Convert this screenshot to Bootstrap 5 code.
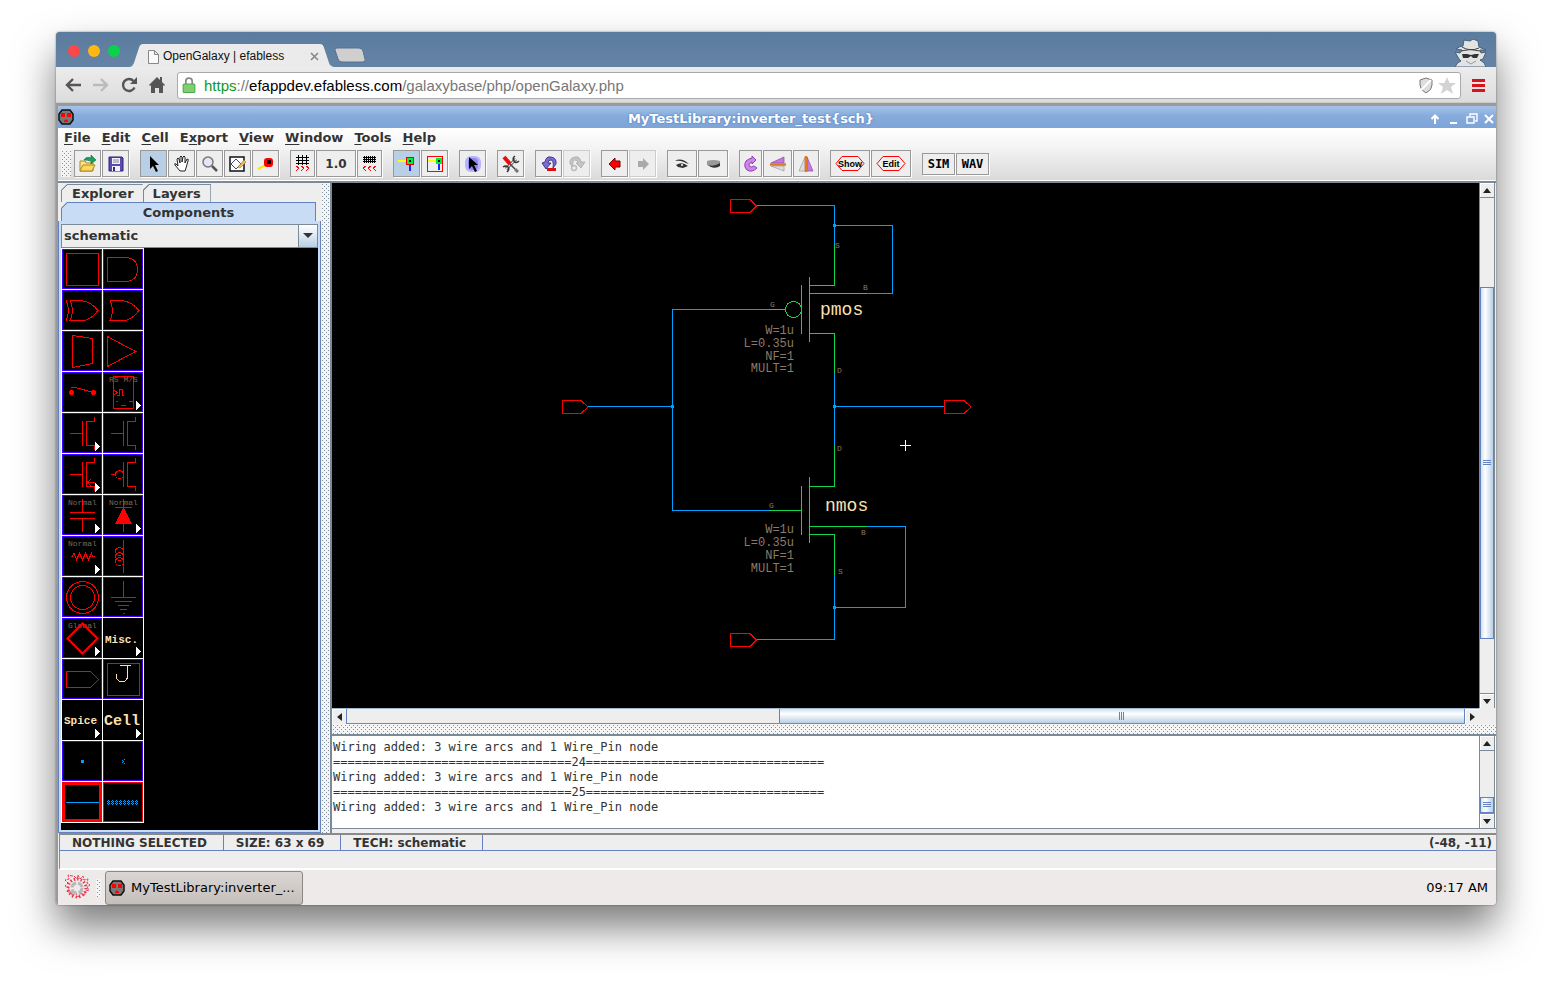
<!DOCTYPE html>
<html lang="en">
<head>
<meta charset="utf-8">
<meta name="viewport" content="width=device-width, initial-scale=1">
<title>OpenGalaxy | efabless</title>
<link href="https://cdn.jsdelivr.net/npm/bootstrap@5.3.0/dist/css/bootstrap.min.css" rel="stylesheet">
<style>
  :root { --steel: #7a8a99; --face: #eeeeee; --blue: #6382bf; --pick: #b8cfe5; }
  body { background: #fff; padding: 32px 56px 80px; font-family: "DejaVu Sans", sans-serif; color: #333; font-size: 12px; line-height: 16px; }
  button { padding: 0; border: 0; background: none; color: inherit; font: inherit; }
  svg { display: block; flex: none; }
  .browser { min-height: calc(100vh - 112px); border-radius: 4px; overflow: hidden; background: #9a9a9a; }
  .browser-shadow { border-radius: 4px; box-shadow: 0 22px 40px rgba(0,0,0,.52), 0 0 2px rgba(0,0,0,.5); }

  /* browser frame */
  .tabstrip { height: 35px; background: linear-gradient(#5b7c9f, #6583a5); padding-left: 12px; }
  .light { width: 12px; height: 12px; border-radius: 50%; margin-bottom: 10px; }
  .tab-item { width: 204px; height: 23px; margin-left: 10px; color: #111; font: 12px/25px "Liberation Sans", sans-serif; }
  .tab-item > svg.tab-shape { position: absolute; inset: 0; width: 100%; height: 100%; }
  .tab-item > .tab-text { position: relative; padding: 0 15px 0 18px; }
  .addressbar { height: 36px; background: linear-gradient(#ececec, #dcdcdc); padding: 1px 9px 0; border-bottom: 1px solid #ccc; }
  .addressbar .nav-btn { width: 18px; margin-right: 10px; }
  .urlbox { height: 27px; background: #fff; border: 1px solid #aaa; border-radius: 3px; font: 15px/25px "Liberation Sans", sans-serif; color: #777; }

  /* remote desktop window */
  .desk { margin: 3px 0 0 2px; background: var(--face); }
  .titlebar { height: 22px; background: linear-gradient(#a6c3ea, #86abdc 45%, #7ea4d8); color: #fff; font-size: 13px; font-weight: 700; text-shadow: 0 0 2px #3c6cb0; }
  .menubar { height: 19px; background: linear-gradient(#fff, #f4f4f4); font-size: 13px; font-weight: 700; padding-left: 6px; gap: 11px; }
  .menubar a { color: #333; text-decoration: none; line-height: 19px; }
  .menubar u { text-underline-offset: 2px; }
  .toolbar { height: 34px; background: linear-gradient(#f4f4f4, #dadada); gap: 11px; border-bottom: 1px solid #fff; padding-left: 3px; }
  .tool-set { gap: 1px; }
  .grip { background: #f4f4f4 url("data:image/svg+xml,%3Csvg xmlns='http://www.w3.org/2000/svg' width='4' height='4'%3E%3Cpath d='M1 1h1v1H1zM3 3h1v1H3z' fill='%238492a0'/%3E%3C/svg%3E"); }
  .toolbar .grip { width: 10px; height: 27px; margin-right: -8px; }
  .tool { width: 27px; height: 27px; border: 1px solid #999; box-shadow: 1px 1px 0 #fff; background: var(--face); display: flex; align-items: center; justify-content: center; font-weight: 700; }
  .tool.on { background: var(--pick); }
  .tool:disabled { border-color: #ccc; }
  .tool.w-grid { width: 25px; } .tool.w-num { width: 40px; } .tool.w-eye { width: 30px; }
  .tool.w-rot { width: 23px; } .tool.w-flip { width: 29px; } .tool.w-mir { width: 26px; }
  .tool.w-sim { width: 33px; height: 22px; color: #000; font: 700 12px/20px "DejaVu Sans Mono", monospace; }

  .workspace { border-top: 2px solid var(--steel); }
  .sidepanel { width: 263px; padding-top: 1px; font-size: 13px; font-weight: 700; }
  .side-tab { --line: var(--steel); --fill: var(--face); height: 18px; border: 1px solid var(--line); border-bottom: 0; line-height: 17px; padding: 0 9px; clip-path: polygon(6px 0, 100% 0, 100% 100%, 0 100%, 0 6px); background: linear-gradient(135deg, var(--line) 5px, var(--fill) 5px) border-box; }
  .side-tab.first { margin-left: 3px; border-right: 0; padding: 0 9px 0 10px; }
  .side-tab.wide { --line: var(--blue); --fill: #c8ddf5; margin: 0 5px 0 3px; height: 19px; text-align: center; }
  .side-body { background: #c8ddf5; border: 1px solid var(--blue); border-top: 0; padding: 3px 2px 2px; }
  .combo { height: 24px; border: 1px solid var(--steel); position: relative; }
  .combo select { appearance: none; width: 100%; height: 22px; border: 0; background: var(--face); color: #333; font: inherit; padding: 0 2px; border-radius: 0; }
  .combo span { position: absolute; right: 0; top: 0; width: 19px; height: 22px; border-left: 1px solid var(--steel); background: linear-gradient(#fff, var(--pick)); pointer-events: none; }
  .palette { background: #000; }
  .cells { display: grid; grid-template-columns: 40px 40px; grid-auto-rows: 40px; gap: 1px; padding: 1px; background: #fff; width: 83px; }
  .cells button { background: #000; box-shadow: inset 0 0 0 1px #40f; }
  .cells button.bare { box-shadow: none; }
  .cells button.red { box-shadow: inset 0 0 0 1px red; }
  .cells button.picked { box-shadow: inset 0 0 0 3px red; }
  .cells svg { fill: none; stroke: red; stroke-width: 1; shape-rendering: crispEdges; }
  .cells text { stroke: none; fill: #786a5c; font: 8px "Liberation Mono", monospace; }
  .cells text.big { fill: #fde0b0; font-weight: 700; font-size: 11px; }
  .split-v { width: 9px; }
  .split-h { height: 10px; }

  .mainpane { min-width: 0; border-left: 2px solid var(--steel); }
  .drawing { background: #000; min-width: 0; overflow: hidden; }
  .drawing text { font: 12px "Liberation Mono", monospace; fill: #8c7a64; text-anchor: end; }
  .drawing text.pin { font-size: 8px; text-anchor: start; }
  .drawing text.name { font-size: 18px; fill: #fde0b0; text-anchor: start; }
  .bar-v { width: 16px; border-left: 1px solid var(--steel); border-right: 1px solid var(--steel); margin-right: 1px; background: var(--face); }
  .bar-h { height: 16px; border-top: 1px solid #a3b8cc; border-bottom: 1px solid var(--steel); background: var(--face); }
  .sb { width: 14px; height: 15px; display: flex; align-items: center; justify-content: center; background: var(--face); box-shadow: inset 1px 1px 0 #fff; }
  .bar-v .sb:first-child { border-bottom: 1px solid var(--steel); }
  .bar-v .sb:last-child { border-top: 1px solid var(--steel); }
  .thumb-v { border: 1px solid var(--blue); background: linear-gradient(90deg, #cfe1f3, #fff 35%, var(--pick)); display: flex; align-items: center; justify-content: center; }
  .thumb-h { border: 1px solid var(--blue); border-width: 0 1px; background: linear-gradient(#cfe1f3, #fff 35%, var(--pick)); display: flex; align-items: center; justify-content: center; }
  .logpane { height: 95px; border-top: 2px solid var(--steel); border-bottom: 1px solid var(--steel); background: #fff; }
  .logpane textarea { border: 0; padding: 4px 0 0 1px; resize: none; overflow: hidden; background: #fff; color: #333; font: 12px/15px "DejaVu Sans Mono", monospace; outline: 0; }
  .status { height: 18px; margin-left: 1px; border-top: 2px solid #8a8a8a; border-left: 1px solid #8a8a8a; border-bottom: 1px solid var(--blue); font-weight: 700; line-height: 16px; }
  .status > .cell-s { padding: 0 16px 0 12px; border-right: 1px solid var(--blue); }
  .status-rest { height: 19px; margin-left: 1px; border-left: 1px solid #8a8a8a; border-bottom: 2px solid #fff; }
  .taskbar { height: 35px; background: #edeae9; color: #000; font-size: 13px; line-height: 18px; padding: 1px 8px 0 4px; }
  .task { width: 198px; height: 34px; border: 1px solid #8c8782; border-radius: 3px; background: linear-gradient(#dad6d3, #c4bfbb); padding: 0 3px; white-space: nowrap; gap: 6px; }
</style>
</head>
<body>
<div class="browser-shadow">
<div class="browser d-flex flex-column">
  <header class="tabstrip d-flex align-items-end">
    <div class="d-flex gap-2 align-self-end">
      <span class="light" style="background:#fc4848"></span><span class="light" style="background:#fdb813"></span><span class="light" style="background:#0bd24c"></span>
    </div>
    <div class="tab-item position-relative">
      <svg class="tab-shape" viewBox="0 0 206 23" preserveAspectRatio="none"><path d="M0 23Q3 22 4 19L9 4Q10 0 13 0H192Q195 0 196 4L201 19Q202 22 206 23Z" fill="#ebebeb"/></svg>
      <div class="tab-text d-flex align-items-center">
        <svg width="11" height="14" viewBox="0 0 11 14" fill="#fafafa" stroke="#888"><path d="M.5.5h6l4 4v9H.5zM6.500.5v4h4"/></svg>
        <span class="ms-1 flex-grow-1">OpenGalaxy | efabless</span>
        <svg width="9" height="9" stroke="#888" stroke-width="1.6"><path d="M1 1l7 7M8 1l-7 7"/></svg>
      </div>
    </div>
    <svg width="34" height="20" viewBox="0 0 34 20"><path d="M1 3Q0 1 3 1H25Q28 1 29 4L31 12Q32 15 29 15H8Q5 15 4 12Z" fill="#cfcfcf" stroke="#55718f"/></svg>
    <svg class="ms-auto me-2" width="34" height="28" viewBox="0 0 34 28">
      <path d="M1 28Q3 23 7 22L5 20 1 13 6 14 8 11 2 10Q6 7 9 7L10 1 16 2 19 0 24 2 25 8 32 11 26 11 27 14 32 13 29 20 26 21Q31 23 32 28Z" fill="#e3e3e3" stroke="#49607a"/>
      <path d="M8 15h5l4 1 4-1h4l-2 4h-4l-2-2-3 2H9z" fill="#333"/><path d="M8 8q8 5 17 1M7 12q9-3 19 0" fill="none" stroke="#444"/><path d="M12 22l5 3 5-3" fill="none" stroke="#999"/>
    </svg>
  </header>
  <div class="addressbar d-flex align-items-center">
    <button class="nav-btn" aria-label="Back"><svg width="16" height="14" fill="none" stroke="#555" stroke-width="2.4"><path d="M16 7H2M8 1L2 7l6 6"/></svg></button>
    <button class="nav-btn" aria-label="Forward"><svg width="16" height="14" fill="none" stroke="#bbb" stroke-width="2.400"><path d="M0 7h14M8 1l6 6-6 6"/></svg></button>
    <button class="nav-btn" aria-label="Reload"><svg width="16" height="16" fill="none" stroke="#555" stroke-width="2.4"><path d="M13.500 10.500A6 6 0 1 1 12.500 4"/><path d="M16 0v7H9z" fill="#555" stroke="none"/></svg></button>
    <button class="nav-btn" aria-label="Home"><svg width="16" height="16" fill="#555"><path d="M8 0l8 8-1 1-1-1v8H10v-5H6v5H2V8L1 9 0 8zM11 0h2v5l-2-2z"/></svg></button>
    <div class="urlbox d-flex align-items-center flex-grow-1 px-1" >
      <svg class="ms-0" width="14" height="16" viewBox="0 0 12 15"><path d="M3 7V4a3 3 0 0 1 6 0v3" fill="none" stroke="#888" stroke-width="1.600"/><rect x=".5" y="6.500" width="11" height="8" rx="1" fill="#7fcf72" stroke="#4ba848"/></svg>
      <div class="flex-grow-1 ms-2" role="textbox" aria-label="Address"><span style="color:#0a9a1e">https</span>://<span style="color:#000">efappdev.efabless.com</span>/galaxybase/php/openGalaxy.php</div>
      <svg width="16" height="17" viewBox="0 0 16 17"><path d="M8 1l6 2v5q0 5-6 8-6-3-6-8V3z" fill="#ddd" stroke="#777"/><path d="M13 3L3 13" stroke="#fff" stroke-width="2"/></svg>
      <svg class="ms-1" width="18" height="17" viewBox="0 0 18 17"><path d="M9 0l2.500 6H18l-5 4 2 7-6-4-6 4 2-7-5-4h6.500z" fill="#d3d3d3"/></svg>
    </div>
    <button class="ms-2" aria-label="Menu"><svg width="18" height="13" fill="#d7141e"><path d="M3 0h13v3H3zM3 5h13v3H3zM3 10h13v3H3z"/></svg></button>
  </div>

  <main class="desk flex-grow-1 d-flex flex-column">
    <div class="titlebar d-flex align-items-center">
      <svg width="16" height="16" viewBox="0 0 16 16"><path d="M4 1h8l3 4v6l-3 4H4l-3-4V5z" fill="#777" stroke="#111" stroke-width="1.500"/><path d="M3 4h4v4H3zM9 4h4v4H9zM6 12l2-2 2 2v1H6z" fill="red"/></svg>
      <div class="flex-grow-1 text-center pt-1">MyTestLibrary:inverter_test{sch}</div>
      <svg class="mt-1" width="68" height="14" viewBox="0 0 68 14" fill="none" stroke="#fff" stroke-width="2"><path d="M7 12V5M3.500 7L7 3.500 10.500 7M22 11h7"/><path d="M39 5h7v6h-7zM42 4V2h7v7h-2" stroke-width="1.400"/><path d="M57 3l8 8M65 3l-8 8"/></svg>
    </div>
    <nav class="menubar d-flex" aria-label="Application menu">
      <a href="#"><u>F</u>ile</a><a href="#"><u>E</u>dit</a><a href="#"><u>C</u>ell</a><a href="#">E<u>x</u>port</a><a href="#"><u>V</u>iew</a><a href="#"><u>W</u>indow</a><a href="#"><u>T</u>ools</a><a href="#"><u>H</u>elp</a>
    </nav>
    <div class="toolbar d-flex align-items-center">
      <div class="grip"></div>
      <div class="tool-set d-flex">
        <button class="tool" aria-label="Open"><svg width="18" height="18" viewBox="0 0 18 18"><path d="M1 16V6h5l1 2h7v8z" fill="#fce588" stroke="#a8891f"/><path d="M1 16l3-6h12l-3 6z" fill="#ffd75e" stroke="#a8891f"/><path d="M5 5q2-4 7-2V0l5 5-5 4V6q-4-1-7-1z" fill="#1ea05a" stroke="#0b6b3a" stroke-width=".6"/></svg></button>
        <button class="tool" aria-label="Save"><svg width="16" height="16" viewBox="0 0 16 16"><path d="M1 1h13l1 1v13H1z" fill="#5b4bb0" stroke="#2d2377"/><path d="M4 2h8v6H4zM4 10h8v5H4z" fill="#f2f0fb"/><path d="M5 4h6M5 6h6" stroke="#888"/><path d="M5 11h2v4H5z" fill="#332a80"/></svg></button>
      </div>
      <div class="tool-set d-flex">
        <button class="tool on" aria-label="Select"><svg width="12" height="18" viewBox="0 0 12 18"><path d="M2 1v13l3-3 3 6 2-1-3-6h4z"/></svg></button>
        <button class="tool" aria-label="Pan"><svg width="18" height="18" viewBox="0 0 18 18" fill="#fff" stroke="#222"><path d="M7 16l-5-6q-1-2 1-1l2 2-1-7q1-2 2 0l1 4V2q1-2 2 0v5l1-5q1-2 2 0v6l2-4q2 0 1 2l-2 7-1 3z"/></svg></button>
        <button class="tool" aria-label="Zoom"><svg width="18" height="18" viewBox="0 0 18 18"><circle cx="7" cy="7" r="5" fill="#e2e6f6" stroke="#777" stroke-width="1.500"/><path d="M11 11l5 5" stroke="#555" stroke-width="2.500"/></svg></button>
        <button class="tool" aria-label="Outline"><svg width="19" height="18" viewBox="0 0 19 18"><path d="M2 2h14v14H2z" fill="#fff" stroke="#111" stroke-width="1.500"/><path d="M3 9l5-5 5 5-5 5z" fill="none" stroke="#448"/><path d="M10 12l6-7 2 2-6 6z" fill="#edbc5c" stroke="#a8702a" stroke-width=".6"/></svg></button>
        <button class="tool" aria-label="Measure"><svg width="19" height="18" viewBox="0 0 19 18"><path d="M2 14l4-2 5-3" stroke="#f3ea00" stroke-width="2" fill="none"/><rect x="8" y="3" width="9" height="9" rx="3" fill="red"/><rect x="11" y="5" width="4" height="4" fill="#200"/></svg></button>
      </div>
      <div class="tool-set d-flex">
        <button class="tool w-grid" aria-label="Coarser grid"><svg width="15" height="17" viewBox="0 0 15 17" fill="none" stroke="#000" shape-rendering="crispEdges"><path d="M1 2.500h13M1 5.500h13M1 8.500h13M3.500 0v10M7.500 0v10M11.500 0v10"/><path d="M1 11l3 2-3 3M6 11l3 2-3 3M11 11l3 2-3 3" stroke="red"/></svg></button>
        <button class="tool w-num">1.0</button>
        <button class="tool w-grid" aria-label="Finer grid"><svg width="15" height="17" viewBox="0 0 15 17" fill="none" stroke="#000" shape-rendering="crispEdges"><path d="M1 2.500h13M1 4.500h13M1 6.500h13M2.500 1v7M4.500 1v7M6.500 1v7M8.500 1v7M10.500 1v7M12.500 1v7"/><path d="M4 11l-3 2 3 3M9 11l-3 2 3 3M14 11l-3 2 3 3" stroke="red"/></svg></button>
      </div>
      <div class="tool-set d-flex">
        <button class="tool on" aria-label="Select objects"><svg width="19" height="18" viewBox="0 0 19 18" shape-rendering="crispEdges"><path d="M1 6h9" stroke="#ff0" stroke-width="2"/><path d="M13 10v6" stroke="#22f" stroke-width="2"/><path d="M9.500 2.500h7v7h-7z" fill="#0e3" stroke="#e00"/><path d="M12 5h2v2h-2z"/></svg></button>
        <button class="tool" aria-label="Select area"><svg width="18" height="18" viewBox="0 0 18 18" shape-rendering="crispEdges"><path d="M1.500 1.500h15v15h-15z" fill="none" stroke="red"/><path d="M2 6h8" stroke="#ff0" stroke-width="2"/><path d="M13 9v6" stroke="#22f" stroke-width="2"/><path d="M10 3h6v6h-6z" fill="#0e3"/><path d="M12 5h2v2h-2z"/></svg></button>
      </div>
      <div class="tool-set d-flex"><button class="tool" aria-label="Special select"><svg width="18" height="18" viewBox="0 0 18 18"><rect x="1" y="1" width="16" height="16" rx="6" fill="#b9b3ff"/><rect x="4" y="3" width="10" height="12" rx="4" fill="#8f85f2"/><path d="M5 2v12l3-3 3 6 2-1-3-6h4z"/></svg></button></div>
      <div class="tool-set d-flex"><button class="tool" aria-label="Preferences"><svg width="18" height="18" viewBox="0 0 18 18"><path d="M4 14L14 4" stroke="#333" stroke-width="3"/><path d="M3 15L15 3" stroke="#eee" stroke-width="1.500"/><path d="M13 1q-3 2-1 5t5 0M1 12q3-2 5 0t-1 5" fill="none" stroke="#333" stroke-width="1.500"/><path d="M2 2l6 7" stroke="#d11" stroke-width="4"/><path d="M8 9l5 5" stroke="#444" stroke-width="1.500"/><path d="M13 14l3 3" stroke="#777" stroke-width="3"/></svg></button></div>
      <div class="tool-set d-flex">
        <button class="tool" aria-label="Undo"><svg width="18" height="18" viewBox="0 0 18 18"><path d="M5 7q1-6 6-5 6 1 5 7l-3 4q1-8-2-8-3 0-3 3h3l-5 6-4-6z" fill="#7a6cd0" stroke="#2b2180" stroke-width=".8"/><path d="M7 13h9v3H7z" fill="#d11"/></svg></button>
        <button class="tool" aria-label="Redo" disabled><svg width="18" height="18" viewBox="0 0 18 18"><path d="M13 7q-1-6-6-5-6 1-5 7l3 3q-1-7 2-7 3 0 3 3H8l5 5 4-6z" fill="#c4c4c4" stroke="#aaa" stroke-width=".8"/><circle cx="6" cy="13" r="2.500" fill="none" stroke="#bbb" stroke-width="1.500"/></svg></button>
      </div>
      <div class="tool-set d-flex">
        <button class="tool" aria-label="Go back"><svg width="14" height="14" viewBox="0 0 14 14"><path d="M1 7l6-6v3h5v6H7v3z" fill="red" stroke="#700"/></svg></button>
        <button class="tool" aria-label="Go forward" disabled><svg width="14" height="14" viewBox="0 0 14 14"><path d="M13 7L7 1v3H2v6h5v3z" fill="#aaa"/></svg></button>
      </div>
      <div class="tool-set d-flex">
        <button class="tool w-eye" aria-label="Expand"><svg width="16" height="12" viewBox="0 0 16 12"><path d="M1 3q6-4 14 3-4-1-5-2-5-2-9-1zM2 7q6-4 12 1l-5 2-5-1z" fill="#333"/><circle cx="8" cy="7" r="1" fill="#fff"/></svg></button>
        <button class="tool w-eye" aria-label="Unexpand"><svg width="16" height="12" viewBox="0 0 16 12"><path d="M2 3q6-2 13 0v4q-3 3-9 2L2 7z" fill="#999"/><path d="M3 7q6 2 12-2v3q-4 3-9 1z" fill="#333"/></svg></button>
      </div>
      <div class="tool-set d-flex">
        <button class="tool w-rot" aria-label="Rotate"><svg width="16" height="18" viewBox="0 0 16 18"><path d="M14 13q-5 5-10 2-4-4-1-9 2-2 6-3V1l4 4-4 4V7Q5 8 6 11q2 2 5 0z" fill="#d083e8" stroke="#8736a8" stroke-width=".9"/></svg></button>
        <button class="tool w-flip" aria-label="Flip"><svg width="18" height="18" viewBox="0 0 18 18"><path d="M2 8l13-6v6z" fill="#c678e0" stroke="#8c46a6" stroke-width=".7"/><path d="M2 11l13 5v-5z" fill="#ddd" stroke="#999" stroke-width=".7"/><path d="M1 9.500h16" stroke="#e07a1c" stroke-width="2.500"/></svg></button>
        <button class="tool w-mir" aria-label="Mirror"><svg width="16" height="18" viewBox="0 0 16 18"><path d="M9 2l6 14H9z" fill="#c678e0" stroke="#8c46a6" stroke-width=".7"/><path d="M7 2L1 16h6z" fill="#ddd" stroke="#999" stroke-width=".7"/><path d="M8 1v16" stroke="#e07a1c" stroke-width="2.500"/></svg></button>
      </div>
      <div class="tool-set d-flex">
        <button class="tool w-num"><svg width="32" height="17" viewBox="0 0 32 17"><path d="M2 8.500L8 1.500H24L30 8.500L24 15.500H8Z" fill="none" stroke="red"/><text x="16" y="12" text-anchor="middle" font-family="Liberation Sans, sans-serif" font-size="9" font-weight="700">Show</text></svg></button>
        <button class="tool w-num"><svg width="32" height="17" viewBox="0 0 32 17"><path d="M2 8.500L8 1.500H24L30 8.500L24 15.500H8Z" fill="none" stroke="red"/><text x="16" y="12" text-anchor="middle" font-family="Liberation Sans, sans-serif" font-size="9">Edit</text></svg></button>
      </div>
      <div class="tool-set d-flex"><button class="tool w-sim">SIM</button><button class="tool w-sim">WAV</button></div>
    </div>

    <div class="workspace flex-grow-1 d-flex">
      <aside class="sidepanel d-flex flex-column">
        <div class="d-flex"><button class="side-tab first">Explorer</button><button class="side-tab">Layers</button></div>
        <button class="side-tab wide">Components</button>
        <div class="side-body flex-grow-1 d-flex flex-column">
          <div class="combo"><select aria-label="Technology"><option>schematic</option></select><span class="d-flex align-items-center justify-content-center"><svg width="10" height="6"><path d="M0 0h10L5 5z" fill="#333"/></svg></span></div>
          <div class="palette flex-grow-1"><div class="cells" id="cells"></div></div>
        </div>
      </aside>
      <div class="split-v grip"></div>
      <section class="mainpane flex-grow-1 d-flex flex-column">
        <div class="d-flex flex-grow-1">
          <div class="drawing flex-grow-1">
            <svg width="1147" height="525" viewBox="332 183 1147 525" fill="none" stroke="#00a0ff" shape-rendering="crispEdges">
              <path d="M757 205.500H834.500V245M834.500 225.500H892.500V293.500H867M769 309.500H672.500V510.500H769M588 406.500H672M834.500 373V446M834.500 406.500H944M867 526.500H905.500V607.500H834.500M834.500 575V639.500H757"/>
              <path d="M833 224h3v3h-3zM671 405h3v3h-3zM833 405h3v3h-3zM833 606h3v3h-3z" fill="#00a0ff" stroke="none"/>
              <g stroke="#10d64c"><path d="M834.500 245V285.500H809.500M809.500 277V342M801.500 285V334M809.500 293.500H867M769 309.500H785M809.500 333.500H834.500V373M834.500 446V486.500H809.500M809.500 477V543M801.500 486V535M769 510.500H801M809.500 526.500H867M809.500 534.500H834.500V575"/><circle cx="793.500" cy="309.500" r="8"/></g>
              <path stroke="red" d="M730.500 199.500H750L756.500 206L750 212.500H730.500ZM562.500 400.500H581L588 407L581 413.500H562.500ZM944.500 400.500H964L971 407L964 413.500H944.500ZM730.500 633.500H750L756.500 640L750 646.500H730.500Z"/>
              <path stroke="#fff" d="M900 445.500h11M905.500 440v11"/>
              <g stroke="none">
                <text class="name" x="820" y="315">pmos</text><text class="name" x="825" y="511">nmos</text>
                <text x="794" y="334">W=1u</text><text x="794" y="347">L=0.35u</text><text x="794" y="360">NF=1</text><text x="794" y="372">MULT=1</text>
                <text x="794" y="533">W=1u</text><text x="794" y="546">L=0.35u</text><text x="794" y="559">NF=1</text><text x="794" y="572">MULT=1</text>
                <text class="pin" x="835" y="248">S</text><text class="pin" x="863" y="290">B</text><text class="pin" x="770" y="307">G</text><text class="pin" x="837" y="373">D</text>
                <text class="pin" x="837" y="451">D</text><text class="pin" x="769" y="508">G</text><text class="pin" x="861" y="535">B</text><text class="pin" x="838" y="574">S</text>
              </g>
            </svg>
          </div>
          <div class="bar-v d-flex flex-column">
            <button class="sb" aria-label="Scroll up"><svg width="8" height="5"><path d="M0 5h8L4 0z" fill="#222"/></svg></button>
            <div style="flex:89"></div><div class="thumb-v" style="flex:351"><svg width="8" height="6" stroke="#6382bf"><path d="M0 .5h8M0 2.500h8M0 4.500h8"/></svg></div><div style="flex:54"></div>
            <button class="sb" aria-label="Scroll down"><svg width="8" height="5"><path d="M0 0h8L4 5z" fill="#222"/></svg></button>
          </div>
        </div>
        <div class="d-flex">
          <div class="bar-h d-flex flex-grow-1">
            <button class="sb" aria-label="Scroll left"><svg width="5" height="8"><path d="M5 0v8L0 4z" fill="#222"/></svg></button>
            <div style="flex:432;border-left:1px solid #6382bf"></div><div class="thumb-h" style="flex:683"><svg width="6" height="8" stroke="#6382bf"><path d="M.5 0v8M2.500 0v8M4.500 0v8"/></svg></div>
            <button class="sb" aria-label="Scroll right"><svg width="5" height="8"><path d="M0 0v8L5 4z" fill="#222"/></svg></button>
          </div>
          <div style="width:17px"></div>
        </div>
        <div class="split-h grip"></div>
        <div class="logpane d-flex">
          <textarea class="flex-grow-1" readonly aria-label="Messages">Wiring added: 3 wire arcs and 1 Wire_Pin node
=================================24=================================
Wiring added: 3 wire arcs and 1 Wire_Pin node
=================================25=================================
Wiring added: 3 wire arcs and 1 Wire_Pin node</textarea>
          <div class="bar-v d-flex flex-column">
            <button class="sb" aria-label="Scroll log up"><svg width="8" height="5"><path d="M0 5h8L4 0z" fill="#222"/></svg></button>
            <div style="flex:48"></div><div class="thumb-v" style="flex:14"><svg width="8" height="6" stroke="#6382bf"><path d="M0 .5h8M0 2.500h8M0 4.500h8"/></svg></div>
            <button class="sb" aria-label="Scroll log down"><svg width="8" height="5"><path d="M0 0h8L4 5z" fill="#222"/></svg></button>
          </div>
        </div>
        <div class="pb-1"></div>
      </section>
    </div>

    <div class="status d-flex"><div class="cell-s">NOTHING SELECTED</div><div class="cell-s">SIZE: 63 x 69</div><div class="cell-s">TECH: schematic</div><div class="ms-auto pe-1">(-48, -11)</div></div>
    <div class="status-rest"></div>
    <footer class="taskbar d-flex align-items-center">
      <svg width="30" height="30" viewBox="-15 -15 30 30" fill="none"><circle r="9" stroke="#e8344e" stroke-width="3" stroke-dasharray="1.400 2.130"/><path d="M-3-12l3 3 1-4 2 4 3-3 1 4 4-1-1 4 3 2-3 2 2 3-4 1v4l-4-2-3 4-2-4-4 3v-4l-5 0 2-4-4-2 3-3-3-3 4-1-1-4 4 1z" stroke="#e8344e" stroke-dasharray="3 1"/><circle r="5" stroke="#b8b8b8" stroke-width="3" stroke-dasharray="6 2"/></svg>
      <div class="grip ms-1" style="width:5px;height:18px"></div>
      <button class="task d-flex align-items-center ms-1"><svg width="16" height="16" viewBox="0 0 16 16"><path d="M4 1h8l3 4v6l-3 4H4l-3-4V5z" fill="#777" stroke="#111" stroke-width="1.500"/><path d="M3 4h4v4H3zM9 4h4v4H9zM6 12l2-2 2 2v1H6z" fill="red"/></svg><span>MyTestLibrary:inverter_...</span></button>
      <div class="ms-auto">09:17 AM</div>
    </footer>
  </main>
</div>
</div>
<script src="https://cdn.jsdelivr.net/npm/bootstrap@5.3.0/dist/js/bootstrap.bundle.min.js"></script>
<script>
  const more = '<path d="M33 29l5 4.500-5 4.500z" fill="#fff" stroke="none"/>';
  const label = t => `<text x="6" y="10">${t}</text>`;
  const fet = '<path d="M20.500 8v25M24.500 8v25M24.500 8.500h8V4M24.500 32.500h8V37"/>';
  const parts = [
    ['Black box', '<path d="M4.500 4.500h32v32h-32z"/>'],
    ['And', '<path d="M4.500 8.500H25q9.500 2 9.500 12t-9.500 12H4.500z"/>'],
    ['Xor', '<path d="M8 10.500h11q10 1 17 10-7 9-14 10H8q5-10 0-20M4 10.500q5 10 0 20"/>'],
    ['Or', '<path d="M7 10.500h11q11 1 18 10-7 9-14 10H7q5-10 0-20"/>'],
    ['Mux', '<path d="M10.500 4.500l20 3v25l-20 4z"/>'],
    ['Buffer', '<path d="M4.500 5.500l28 15-28 15z"/>'],
    ['Switch', '<g fill="red"><circle cx="9.500" cy="20.500" r="2"/><circle cx="31.500" cy="20.500" r="2"/></g><path d="M9 15.500h4l19 5"/>'],
    ['Flip-flop', '<path d="M10.500 4.500h20v32h-20zM11 18l3 2.500-3 2.500M14 23.500h2.500v-6h3v6H21M13 29.500h2M18 33.500h5M26 29.500h4"/>' + label('RS M/S') + more],
    ['nMOS', '<path d="M8 20.500h12"/>' + fet + more],
    ['DMOS', '<path d="M8 20.500h12"/>' + fet],
    ['nMOS four-port', '<path d="M8 20.500h12M33 28.500h-8l4-3m-4 3l4 3"/>' + fet + more],
    ['pMOS', '<path d="M8 20.500h4"/><circle cx="16.500" cy="20.500" r="4"/>' + fet],
    ['Capacitor', '<path d="M20.500 4v13.500M8 17.500h25M8 23.500h25M20.500 23v14"/>' + label('Normal') + more],
    ['Diode', '<path d="M20.500 4v33M12 12.500h17"/><path d="M20.500 13l-7.500 15.500h15z" fill="red"/>' + label('Normal') + more],
    ['Resistor', '<path d="M9 20.500h1l2-3 2.500 6 3-6 3 6 3-6 3 6 3-6 1 3h2"/>' + label('Normal') + more],
    ['Inductor', '<path d="M20.500 4v33"/><circle cx="16.500" cy="15.500" r="4"/><circle cx="16.500" cy="20.500" r="4"/><circle cx="16.500" cy="25.500" r="4"/>'],
    ['Source', '<circle cx="20.500" cy="20.500" r="16"/><circle cx="20.500" cy="20.500" r="12"/>'],
    ['Ground', '<path d="M20.500 4v17M8 20.500h25M12 24.500h17M15 28.500h11M17 32.500h7M20 36.500h2"/>'],
    ['Global', label('Global') + '<path stroke-width="2" shape-rendering="auto" d="M20.500 5.500l15 15-15 15-15-15z"/>' + more],
    ['Misc', '<text class="big" x="2" y="25">Misc.</text>' + more, 'bare'],
    ['Off-page', '<path d="M4.500 12.500h24l8 8-8 8h-24z"/>'],
    ['Icon text', '<path d="M4.500 4.500h32v32h-32z"/><path d="M17 6.500h11M24.500 6v12q-1 5-5.500 5t-5.500-5v-3" stroke="#fde0b0"/>'],
    ['Spice', '<text class="big" x="2" y="24">Spice</text>' + more, 'bare'],
    ['Cell', '<text class="big" style="font-size:15px" x="1" y="25">Cell</text>' + more, 'bare'],
    ['Wire pin', '<path d="M19 19h3v3h-3z" fill="#00a0ff" stroke="none"/>'],
    ['Bus pin', '<path d="M19 19.500h1m1-1h1m-2 2h1m-2 1h1m1 1h1" stroke="#00a0ff"/>'],
    ['Wire', '<path d="M4 20.500h33" stroke="#00a0ff"/>', 'picked'],
    ['Bus', '<path d="M5 18.500h32M5 20.500h32M5 22.500h32" stroke="#00a0ff" stroke-dasharray="1 3"/><path d="M4 19.500h32M4 21.500h32" stroke="#00a0ff" stroke-dasharray="1 1"/>', 'red']
  ];
  document.getElementById('cells').innerHTML = parts.map(([n, art, c = '']) =>
    `<button class="${c}" aria-label="${n}"><svg width="40" height="40" viewBox="0 0 40 40">${art}</svg></button>`).join('');
</script>
</body>
</html>
